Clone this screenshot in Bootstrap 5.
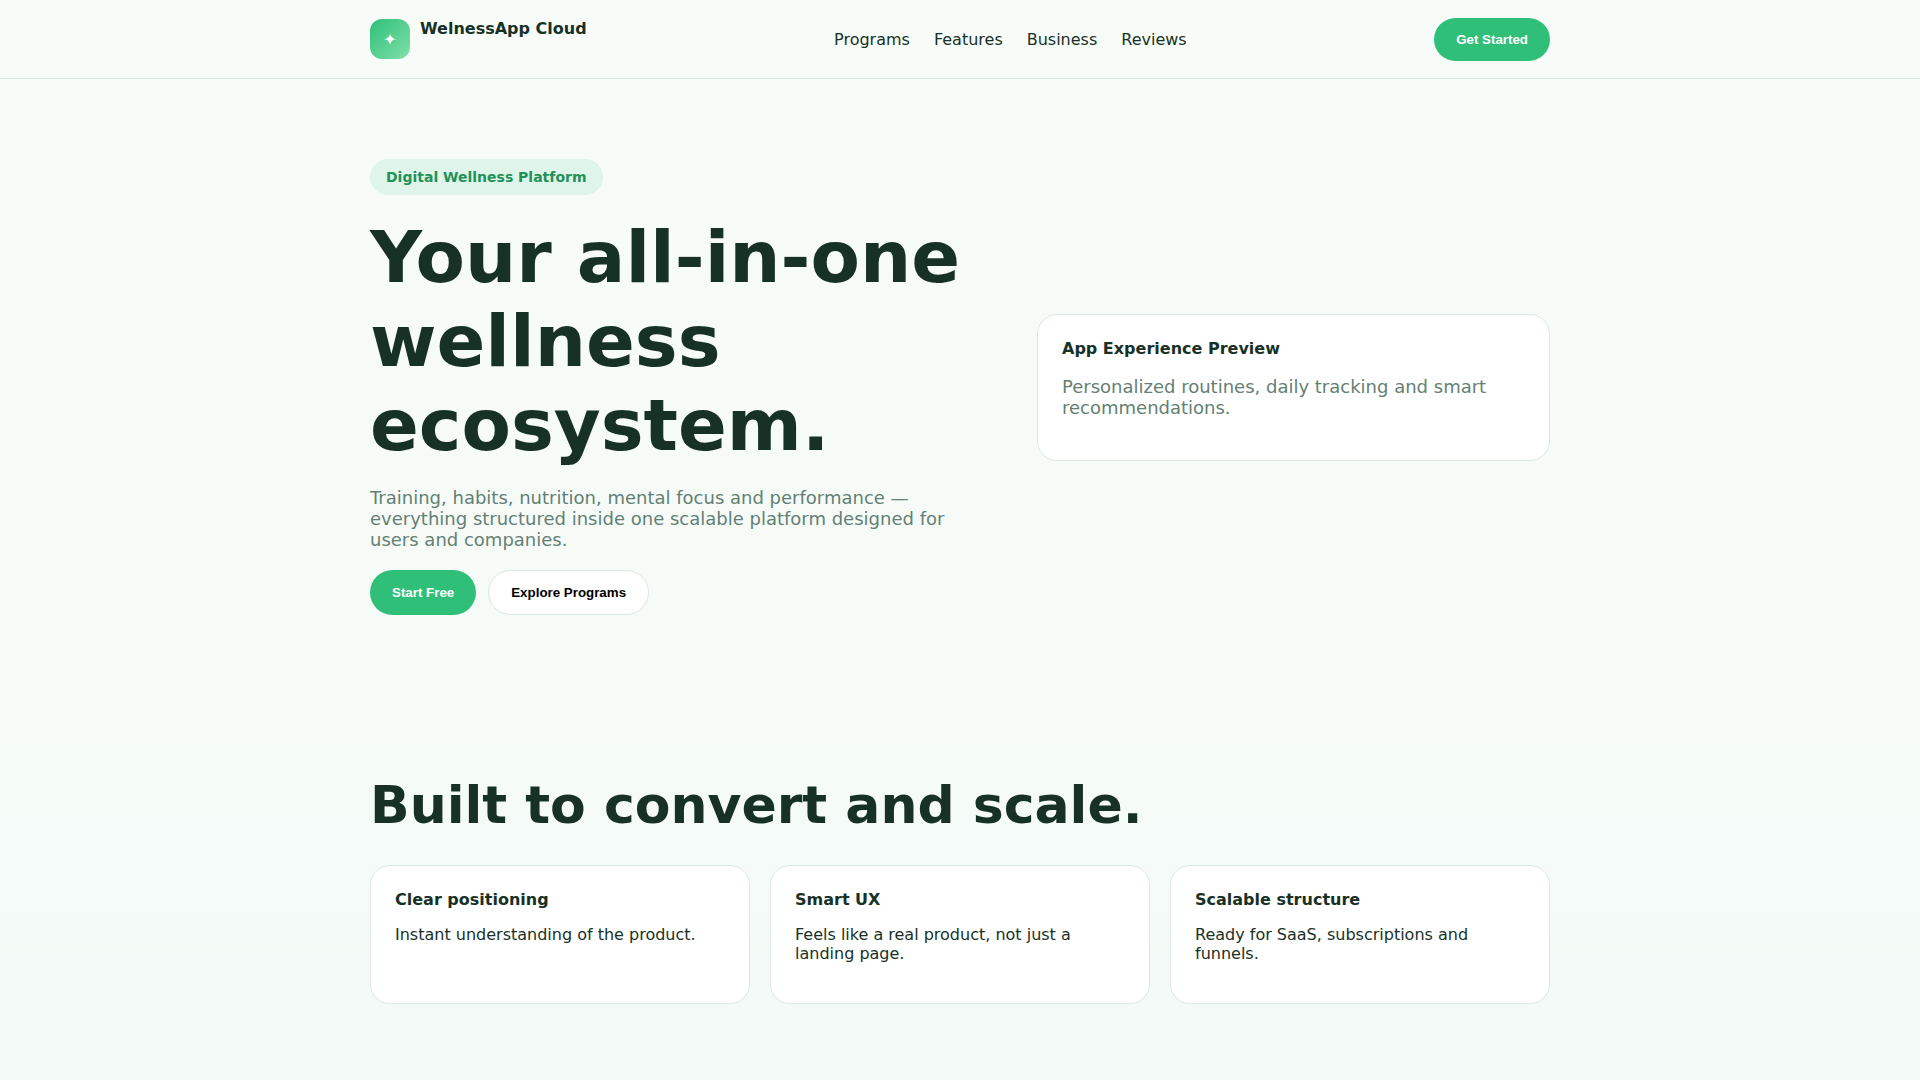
<!DOCTYPE html>
<html lang="en">
<head>
<meta charset="utf-8">
<meta name="viewport" content="width=device-width, initial-scale=1">
<title>WelnessApp Cloud</title>
<link href="https://cdn.jsdelivr.net/npm/bootstrap@5.3.0/dist/css/bootstrap.min.css" rel="stylesheet">
<style>
:root { --ink: #173127; --muted: #648074; --green: #2fbf78; --line: #dbe9e2; }
body {
  font-family: "DejaVu Sans", sans-serif;
  font-size: 16px;
  line-height: 19px;
  color: var(--ink);
  background: linear-gradient(180deg, #f8fcf9, #f4faf7);
  min-height: 100vh;
}
.wrap { width: 100%; max-width: 1220px; margin: 0 auto; padding: 0 20px; }
.site-header { border-bottom: 1px solid var(--line); }
.header-row { min-height: 78px; }
.brand { gap: 10px; color: var(--ink); }
.brand-icon {
  width: 40px; height: 40px; border-radius: 12px;
  color: #fff; background: linear-gradient(135deg, #2fbf78, #7fe0aa);
}
.menu { gap: 24px; }
.menu a { color: var(--ink); text-decoration: none; }
.pill-btn {
  --bs-btn-font-family: "Liberation Sans", Arial, sans-serif;
  --bs-btn-font-size: 13.333px;
  --bs-btn-font-weight: 700;
  --bs-btn-line-height: 15px;
  --bs-btn-padding-x: 22px;
  --bs-btn-padding-y: 14px;
  --bs-btn-border-width: 0;
  --bs-btn-color: #fff;
  --bs-btn-bg: var(--green);
  --bs-btn-hover-color: #fff;
  --bs-btn-hover-bg: #28a869;
}
.pill-light {
  --bs-btn-border-width: 1px;
  --bs-btn-border-color: var(--line);
  --bs-btn-color: #000;
  --bs-btn-bg: #fff;
  --bs-btn-hover-color: #000;
  --bs-btn-hover-bg: #f3f9f6;
}
.block-pad { padding: 80px 0; }
.hero-grid { display: grid; grid-template-columns: 1.1fr 0.9fr; gap: 40px; align-items: center; }
.tagline {
  padding: 10px 16px; font-size: 14px; line-height: 16px;
  color: #1f9259; background: #dff5e9;
}
.hero-title { font-size: 72px; line-height: 84px; margin: 20px 0; }
.intro { font-size: 18px; line-height: 21px; color: var(--muted); }
.actions { gap: 12px; margin-top: 20px; }
.section-title { font-size: 52px; line-height: 60px; margin-bottom: 30px; }
.panel { padding: 24px; border: 1px solid var(--line); border-radius: 20px; background: #fff; }
.panel h3 { font-size: 16px; line-height: 19px; margin: 0; }
.panel .intro { margin: 18px 0; }
.panel .detail { margin: 16px 0; }
.features { display: grid; grid-template-columns: repeat(3, 1fr); gap: 20px; }
@media (max-width: 900px) {
  .hero-grid, .features { grid-template-columns: 1fr; }
  .menu { display: none !important; }
  .hero-title { font-size: 44px; line-height: 52px; }
}
</style>
</head>
<body>
<header class="site-header">
  <div class="wrap">
    <div class="header-row d-flex justify-content-between align-items-center">
      <a href="#" class="brand d-flex fw-bold text-decoration-none">
        <span class="brand-icon d-flex align-items-center justify-content-center">✦</span>
        <span>WelnessApp Cloud</span>
      </a>
      <nav class="menu d-flex">
        <a href="#programs">Programs</a>
        <a href="#features">Features</a>
        <a href="#business">Business</a>
        <a href="#reviews">Reviews</a>
      </nav>
      <button type="button" class="btn pill-btn rounded-pill">Get Started</button>
    </div>
  </div>
</header>
<main>
  <section class="block-pad">
    <div class="wrap hero-grid">
      <div>
        <div class="d-flex"><span class="tagline rounded-pill fw-bold">Digital Wellness Platform</span></div>
        <h1 class="hero-title fw-bold">Your all-in-one wellness ecosystem.</h1>
        <p class="intro mb-0">Training, habits, nutrition, mental focus and performance — everything structured inside one scalable platform designed for users and companies.</p>
        <div class="actions d-flex flex-wrap">
          <button type="button" class="btn pill-btn rounded-pill">Start Free</button>
          <button type="button" class="btn pill-btn pill-light rounded-pill">Explore Programs</button>
        </div>
      </div>
      <div class="panel">
        <h3 class="fw-bold">App Experience Preview</h3>
        <p class="intro">Personalized routines, daily tracking and smart recommendations.</p>
      </div>
    </div>
  </section>
  <section class="block-pad" id="features">
    <div class="wrap">
      <h2 class="section-title fw-bold">Built to convert and scale.</h2>
      <div class="features">
        <div class="panel">
          <h3 class="fw-bold">Clear positioning</h3>
          <p class="detail">Instant understanding of the product.</p>
        </div>
        <div class="panel">
          <h3 class="fw-bold">Smart UX</h3>
          <p class="detail">Feels like a real product, not just a landing page.</p>
        </div>
        <div class="panel">
          <h3 class="fw-bold">Scalable structure</h3>
          <p class="detail">Ready for SaaS, subscriptions and funnels.</p>
        </div>
      </div>
    </div>
  </section>
</main>
<script src="https://cdn.jsdelivr.net/npm/bootstrap@5.3.0/dist/js/bootstrap.bundle.min.js"></script>
</body>
</html>
